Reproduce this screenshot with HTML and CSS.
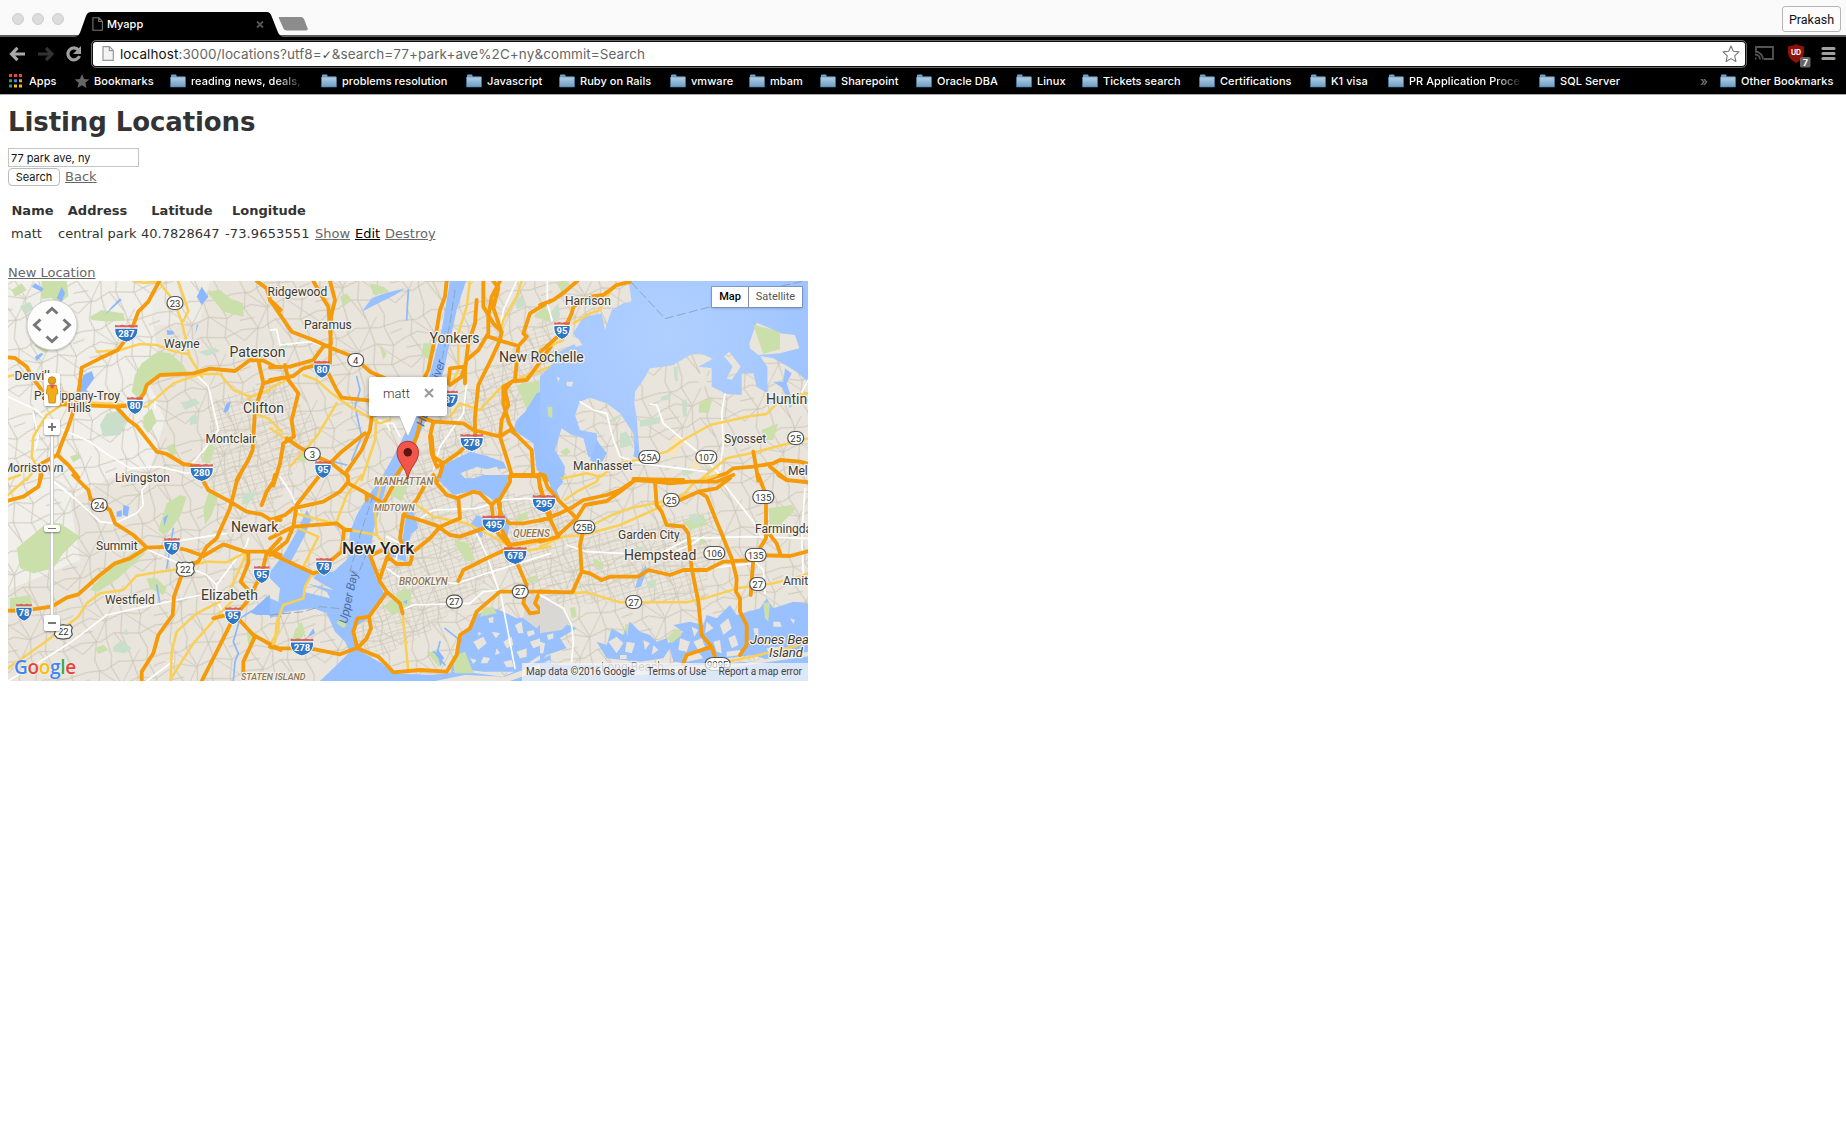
FILE: index.html
```html
<!DOCTYPE html>
<html lang="en">
<head>
<meta charset="utf-8">
<title>Myapp</title>
<link rel="stylesheet" href="styles.css">
</head>
<body>
<svg class="defs" width="0" height="0">
  <defs>
    <linearGradient id="fold" x1="0" y1="0" x2="0" y2="1"><stop offset="0" stop-color="#b4d0e4"/><stop offset="1" stop-color="#6c9dc4"/></linearGradient>
    <symbol id="folder" viewBox="0 0 16 14"><path d="M1 2.500V1.500Q1 .5 2 .5h3.500q1 0 1 1v1H15V13H1z" fill="#78a5c8"/><path d="M.5 3h15v10H.5z" fill="url(#fold)" stroke="#4e7fa8" stroke-width=".6"/></symbol>
    <symbol id="page" viewBox="0 0 12 15"><path d="M1 .7h6.500L11.300 4.500V14.300H1zM7.300 .7v4h4" stroke-width="1.200"/></symbol>
  </defs>
</svg>
<header class="chrome">
  <div class="titlebar">
    <div class="lights"><i></i><i></i><i></i></div>
    <svg class="tabs" width="240" height="25" viewBox="0 0 240 25">
      <path d="M0 25C4 24 5 21 6 18L11 4Q12.500 0 16 0H192Q195 0 196.500 4L202 18Q204 24 208 25z" fill="#000"/>
      <path d="M204 5h22q2 0 3 2l3.500 9q.8 2.500-1.500 2.500h-19q-3 0-4-3l-4-9q-.6-1.500 0-1.500z" fill="#8c8c8c"/>
      <path d="M182 9.500l6 6M188 9.500l-6 6" stroke="#555" stroke-width="1.800"/>
    </svg>
    <div class="tabname"><svg width="11" height="14" fill="none" stroke="#777"><use href="#page"/></svg><span>Myapp</span></div>
    <button class="profile">Prakash</button>
  </div>
  <div class="toolbar">
    <svg class="nav" width="90" height="28" viewBox="0 0 90 28" fill="none" stroke-width="3.200">
      <path d="M12 14h13M17.500 7.800L11.500 14l6 6.200" stroke="#a9a9a9"/>
      <path d="M38 14h13M46 8l6 6-6 6" stroke="#333"/>
      <path d="M78.500 10A6 6 0 1 0 79.500 16" stroke="#a0a0a0"/><path d="M81 6v8h-8z" fill="#a0a0a0"/>
    </svg>
    <div class="omnibox">
      <svg width="12" height="15" fill="#f4f4f4" stroke="#999"><use href="#page"/></svg>
      <span class="url"><b>localhost</b>:3000/locations?utf8=<i>✓</i>&amp;search=77+park+ave%2C+ny&amp;commit=Search</span>
      <svg class="fav" width="18" height="18" viewBox="0 0 18 18"><path d="M9 1l2.300 5.300 5.700.6-4.300 3.900 1.200 5.700L9 13.600l-4.900 2.900 1.200-5.700L1 6.900l5.700-.6z" fill="#fff" stroke="#777" stroke-width="1.100" stroke-linejoin="round"/></svg>
    </div>
    <svg class="ext" width="96" height="30" viewBox="0 0 96 30">
      <g fill="none" stroke="#555" stroke-width="1.800"><path d="M6 13V8h17v12h-9M5 15.500a5 5 0 0 1 5 5M5 12.500a8 8 0 0 1 8 8"/><path d="M5 19.500h1.500"/></g>
      <path d="M46 5c-3 2-6 2-8 2.500V13c0 6 4 8.500 8 11 4-2.500 8-5 8-11V7.500C52 7 49 7 46 5z" fill="#90110a"/>
      <text x="46" y="16" class="ub">UD</text>
      <rect x="50" y="18" width="10.500" height="10.500" rx="1.500" fill="#666"/><text x="55.300" y="27" class="count">7</text>
      <path d="M73 9.500h11M73 14.500h11M73 19.500h11" stroke="#a0a0a0" stroke-width="3.200" stroke-linecap="round"/>
    </svg>
  </div>
  <nav class="bookmarks">
    <a><svg width="13" height="14" viewBox="0 0 13 14"><path d="M0 0h3v3H0zM5 0h3v3H5zM10 0h3v3h-3z" fill="#f44336"/><path d="M0 5.300h3v3H0zM0 10.600h3v3H0z" fill="#34a05f"/><path d="M5 5.300h3v3H5z" fill="#4285f4"/><path d="M10 5.300h3v3h-3z" fill="#f0a020"/><path d="M5 10.600h3v3H5zM10 10.600h3v3h-3z" fill="#fbbc05"/></svg><span>Apps</span></a>
    <a><svg width="15" height="14" viewBox="0 0 18 17"><path d="M9 0l2.500 6 6.500.6-5 4.100 1.600 6.300L9 13.600 3.400 17 5 10.700 0 6.600 6.500 6z" fill="#666"/></svg><span>Bookmarks</span></a>
    <a><svg><use href="#folder"/></svg><span class="fade">reading news, deals,</span></a>
    <a><svg><use href="#folder"/></svg><span>problems resolution</span></a>
    <a><svg><use href="#folder"/></svg><span>Javascript</span></a>
    <a><svg><use href="#folder"/></svg><span>Ruby on Rails</span></a>
    <a><svg><use href="#folder"/></svg><span>vmware</span></a>
    <a><svg><use href="#folder"/></svg><span>mbam</span></a>
    <a><svg><use href="#folder"/></svg><span>Sharepoint</span></a>
    <a><svg><use href="#folder"/></svg><span>Oracle DBA</span></a>
    <a><svg><use href="#folder"/></svg><span>Linux</span></a>
    <a><svg><use href="#folder"/></svg><span>Tickets search</span></a>
    <a><svg><use href="#folder"/></svg><span>Certifications</span></a>
    <a><svg><use href="#folder"/></svg><span>K1 visa</span></a>
    <a><svg><use href="#folder"/></svg><span class="fade">PR Application Proce</span></a>
    <a><svg><use href="#folder"/></svg><span>SQL Server</span></a>
    <a class="more">»</a>
    <a><svg><use href="#folder"/></svg><span>Other Bookmarks</span></a>
  </nav>
</header>
<main>
  <h1>Listing Locations</h1>
  <form class="search">
    <input type="text" value="77 park ave, ny">
    <div class="actions"><button type="button">Search</button><a href="#">Back</a></div>
  </form>
  <table>
    <colgroup><col class="c1"><col class="c2"><col class="c3"><col class="c4"><col class="c5"><col class="c6"><col class="c7"></colgroup>
    <tr><th>Name</th><th>Address</th><th>Latitude</th><th>Longitude</th><th colspan="3"></th></tr>
    <tr><td>matt</td><td>central park</td><td>40.7828647</td><td class="lng">-73.9653551</td><td><a href="#">Show</a></td><td><a href="#" class="hot">Edit</a></td><td><a href="#">Destroy</a></td></tr>
  </table>
  <a href="#" class="new">New Location</a>
  <section class="map">
    <svg class="tiles" width="800" height="400" viewBox="8 281 800 400">
      <defs>
        <pattern id="streets" width="97" height="83" patternUnits="userSpaceOnUse" patternTransform="rotate(-14) scale(.8)">
          <path d="M0 12L22 15 41 8 70 14 97 12M0 34L18 30 37 38 61 33 82 40 97 34M0 58L25 62 44 55 75 63 97 58M12 0L15 14 9 33 20 60 12 83M34 0L30 12 38 37 33 59 34 83M57 0L60 32 52 57 57 83M80 0L76 15 82 40 74 62 80 83M0 72L20 60 38 37 60 11 70 0M61 33L97 72M15 14L37 38M44 55L57 83M0 46L19 47M82 24L97 22" fill="none" stroke="#c9c1b2" stroke-width="1.050"/>
        </pattern>
        <pattern id="grid" width="13" height="9" patternUnits="userSpaceOnUse" patternTransform="rotate(-16)">
          <path d="M0 0H13M0 4.500H13M0 0V9M6.500 0V9" fill="none" stroke="#cfc8ba" stroke-width=".7"/>
        </pattern>
        <radialGradient id="sea" gradientUnits="userSpaceOnUse" cx="380" cy="200" r="620"><stop offset="0" stop-color="#b0d0ff"/><stop offset=".4" stop-color="#a8caff"/><stop offset="1" stop-color="#96beff"/></radialGradient>
        <path id="i2" d="M-11.500-4.500h23C12 2 9 7 0 9.500-9 7-12 2-11.500-4.500z"/>
        <path id="i1" d="M-8-4.500H8C9 2 6 7 0 9.500-6 7-9 2-8-4.500z"/>
        <g id="is"><use href="#i1" fill="#2f76c4" stroke="#fff" stroke-width="1"/><path d="M-8-5.500L-7.500-8l2 .8L-3-8l3 .8L3-8l2.500.8L7.500-8 8-5.500z" fill="#d9615d"/></g>
        <g id="iw"><use href="#i2" fill="#2f76c4" stroke="#fff" stroke-width="1"/><path d="M-11.500-5.500L-11-8l3 .8L-4-8l4 .8L4-8l4 .8 3-.8.5 2.500z" fill="#d9615d"/></g>
        <rect id="p1" x="-8" y="-6.500" width="16" height="13" rx="6.500"/>
        <rect id="p3" x="-10.500" y="-6.500" width="21" height="13" rx="6.500"/>
        <path id="us" d="M-7-7l3 .8L0-7l4 .8L7-7l2 3-1 3 1 4-3 3.500-6 1-6-1L-9 3l1-4-1-3z"/>
      </defs>
      <rect x="8" y="281" width="800" height="400" fill="#e9e5dc"/>
      <path d="M8 281H160L152 318 158 352 148 380 165 420 150 470 110 478 70 500 80 560 8 590z" fill="#f0efea"/>
      <path d="M150 281h60l-10 40-45 5z" fill="#eeece6"/>
      <rect x="8" y="281" width="800" height="400" fill="url(#streets)"/>
      <path d="M400 470l65-70 85-90 10 70-70 60-30 60-40 50zM385 560l120-70 100 40 110-20-10 90-160 5-40-40-80 70-60 30-20-60zM210 400l70-20 40 50-50 80-60-20z" fill="url(#grid)"/>

      <g transform="translate(0 270) scale(.333333)">
        <path class="park" d="M125 33h75l5 45-30 25-20-20-30 5zM35 60l30-20 15 20-35 20zM270 140l35-20 65 10 5 20-50 5-50-5zM425 280l50-35 35 5 40 35 10 20-80 5-40 30-15 55-30-30 10-50zM620 65l40-5 30 25 40 15v40l-60-15zM430 440l25-25 15 40-25 35-15-20zM500 530l20-10 10 30-15 10zM605 575l20-55 20 10-15 50zM210 560l20-8 15 10-25 15zM100 225l30-10 25 15-20 20z"/>
        <path class="grove" d="M320 430l50-10 10 30-20 45-50 5-10-35zM545 400l40-15 15 15-45 20zM595 245l50-12 15 10-40 15zM570 440l20-5 5 25-25 5zM60 110l30-15 10 20-25 20z"/>
        <path class="lake" d="M185 50l10 20-10 25-15-10zM95 50l10-10 25 15-5 10zM335 110l25-25 5 5-50 45zM605 50l20 30-20 25-15-25zM240 350l10-35 25-12 8 22-25 35 10 5-30 5zM105 260l20-12 5 5-20 20zM670 425l10-25 12-5-6 25-10 8zM500 180l20 3 2 10-20 2zM590 165l6-3-10 30z"/>
        <path class="white" d="M24 380L110 420 155 465 270 515 310 545 390 595 480 590 560 610 610 600M595 320L625 350 655 480 640 505 570 590M465 380V415M100 430l15 70-10 40"/>
        <path class="minor" d="M24 320L60 310 80 315M290 245L360 240 420 222 470 225 520 243 565 253 605 320 M400 33L430 38 475 35 520 90 545 155 570 265M535 33l20 60 10 30-15 30M24 628L60 615M155 630v-170M160 360L210 370 230 395 400 405 440 410 520 340 600 312 660 312 700 360 750 380 810 360M200 395L140 435 100 500 95 560 110 590 80 630M745 385l30 50 30 10 40 40"/>
        <path class="major" d="M478 33L445 95 415 125 400 165 380 205 352 241 300 265 245 293 238 350 228 400 205 470 185 520 172 555 125 580 120 630M172 555L205 585 235 622M24 262L45 264 80 290 95 320 125 360 130 385 160 402 275 407 350 410 405 405 432 370 440 345 480 315 580 310 630 296 705 303 750 270 790 272 825 290 842 292M350 412L385 450 410 468 470 545 500 552 550 582 600 590M770 33L800 55 810 90 842 120M775 272L790 340 765 420 758 540 745 570 710 630M790 340L842 325"/>
      </g>
      <g transform="translate(0 475) scale(.333333)">
        <path class="park" d="M50 220l90-75 40 0 60 40-50 50-30 45-60 15-40-15zM30 370l60-10 10 45-70 10zM475 165l25-80 40-25 20 5-20 60-30 40-20 15zM270 345l60-70 90-55 15 15-80 75-60 40zM440 310l30 0 30 30-10 20-40-20zM740 470l30 0v20l-25 20zM285 520l25-10 15 15-30 12zM655 60l-20 60-20 30-5-50 20-60z"/>
        <path class="grove" d="M340 515l25-20 30 25-20 15-35-5zM730 55l45-5-30 35-20 5zM380 460l5 20-18-3z"/>
        <path class="lake" d="M350 110l15-5v20h-15zM370 90l18 5-5 30-15-5zM490 130l15-12-12 35zM842 350L800 365 750 412 770 420 842 420z"/>
        <path class="stream" d="M700 618L705 560 715 535 700 500 720 430 755 408 842 425M470 330l10 55M500 280l20-120"/>
        <path class="white" d="M155 15L230 75 300 140 345 145 410 115 430 90 425 45 460 10M24 618L120 560 215 500 320 420 410 400 600 360 642 355M430 218L560 275 620 300 650 330 740 210 745 190M520 200L680 175M440 618l80-60M650 330v50l40 60"/>
        <path class="minor" d="M24 580L130 505 235 425 260 385 300 355 370 345 410 302 480 290 540 282 620 260 680 262 735 233M740 233L690 345 660 380 590 415 530 470 515 530 512 618M700 375l-40 40-80 90-70 110M842 300L835 470 815 500M24 60L80 10"/>
        <path class="major" d="M220 0L265 45 272 72 330 105 345 145 400 180 440 218M125 0L115 35 70 65 24 77M24 407L70 407 155 395 200 368 235 358 300 300 345 265 390 250 440 218 515 215 560 225 610 243 670 208 735 230 810 230 842 240M545 300L522 365 518 420 475 480 460 535 425 590V618M560 272L595 260 620 215 650 190 690 100 710 20 720 0M745 235V265L722 320 745 345M842 190L800 235 785 295 745 375 700 430 655 520 605 618M640 430L700 415 760 480 842 525M765 485L730 560V618M785 90L800 50 820 20 825 0M600 0L625 45 690 80 740 110 785 118 810 133 842 135"/>
      </g>

      <g transform="translate(270 270) scale(.333333)">
        <path class="park" d="M210 80l20-10 15 20-25 20zM300 40l40 10 20 15-50 10zM330 230l20 20-10 20zM460 220l25 0-5 50-25-15zM740 345l80-15-10 50-40 40zM790 140l30-30 20 15v30zM80 570l20-20 10 30zM420 560l10 25-10 30z"/>
        <path class="grove" d="M25 245l15-30 15 10-15 30zM735 90l20-12 10 30-25 10z"/>
        <path class="wet" d="M540 33H588L560 120 545 190 522 300 488 400 455 480 420 545 385 630H330L370 560 400 500 430 440 475 330 515 180zM842 355L800 370 765 425 740 450 730 480 790 520 800 600 842 630zM600 545L650 558 700 575 710 595 660 600 620 590 570 610 590 630H490L530 580zM275 125l30-40 40-15 60-15-30 20-50 25z"/>
        <path class="stream" d="M260 320l10 40-15 50 20 90-30 70M415 60l-5 90M190 575l40 10"/>
        <path class="land" d="M640 600l40-10 15 25-50 8z"/>
        <path class="white" d="M0 180L20 178 30 225 120 215 150 225M740 33L700 120 690 180M590 340l-10 90-70 100-20 70M360 480l-10-20-40-15M390 500l-20-40-50 0"/>
        <path class="minor" d="M600 33L590 110 565 190V300L550 330M755 33L740 80 700 150 690 190M842 290L760 320 690 355 630 420 570 400 540 440M100 315L140 330 185 370 240 410 330 460 360 450M0 355L50 330M200 400L140 500 60 590M0 475l60 40M320 450l-5 60-40 120"/>
        <path class="major" d="M130 33L150 70 175 110 183 220M180 33L195 90 183 140 180 280M0 90L65 185 130 210 185 235 250 260 300 305 345 325M0 292L60 290 130 270 160 230 180 225M0 330L70 318 100 295 160 280 180 320 200 360 215 383 300 392M45 285L55 330 85 370 65 450 72 500 40 520 30 580 15 630M50 505L85 530 140 560 185 580 235 620M305 440L300 480 275 540 230 605M185 575L215 545 285 490M530 33L525 80 510 120 500 180 475 300 465 320M455 440L440 500 410 570 370 630M460 445L490 455 580 460 610 480 690 500 720 480 740 495 785 540 790 615M490 455L480 500 485 550 500 590 520 580 570 545 605 510M485 500l5 60 30 20-15 50M640 33V110L670 160 695 185 690 210 665 265 625 345 615 440V510M690 33L665 80 655 140V190L625 240 590 270 575 320 540 345M620 90L615 160 595 220 585 300V340M535 340L540 295 585 290M655 200L700 215 745 228 770 200 760 190 780 130 842 92M745 228L735 330 700 350 700 400 718 460 735 490M842 230L800 290 770 330 725 335 705 360 715 405 695 450 690 500 715 580 725 615 780 615 842 628M670 33l15 20-15 60 25 75"/>
        <path class="ferry" d="M555 60L540 160 515 270"/>
      </g>

      <g transform="translate(540 270) scale(.333333)">
        <path class="sea" d="M265 33H842V370L775 310 745 290 700 265 660 258 682 290 682 370 650 350 640 310 605 310 605 375 560 372 515 350V295L475 290 530 260 555 262 578 290 560 325 575 330 602 290 568 245 550 262 515 265 480 250 450 255 400 285 370 290 330 295 310 330 285 365 283 400 290 440 300 570 285 560 280 490 240 430 200 400 150 383 120 395 105 435 120 480 170 490 175 570 145 560 130 505 95 495 65 475 45 540 75 590 70 630H0V320L40 280 40 255 115 215 100 190 130 140 185 130 195 180 215 120 250 100 275 95 270 60z"/>
        <path class="land" d="M628 220L650 158 690 175 720 190 765 195 778 235 720 250 655 255 630 235zM80 335l20 0-5 15-15-3zM88 200l25 5 15 20-20 5zM470 320l30-30 0 50-15 20zM50 320l10 5-5 10z"/>
        <path class="wet" d="M735 295l20 15-15 30 20 60-10 15-22-60-28-20 30 0zM150 570l20-60 30 40-20 40zM280 560l10-50 8 50z"/>
        <path class="park" d="M640 165l50 12 30 10v50l-50 15zM50 40l20-8 20 10-25 25zM478 395l40-12-12 45-30 0zM665 480l50-20-15 50-35 0zM22 410l15 0 0 35-12-5zM60 545l20-12 12 12-15 12z"/>
        <path class="grove" d="M400 290l12 0 2 45-10-5zM425 395l15-8v50l-10 5zM365 380l30-12-5 20-30 5zM210 450l35-20-10 15-25 15zM300 450l60-10 0 20-60 10zM240 490l20-5 20 40-40 10zM30 130l25-30 5 40-20 20zM425 600l30-12 5 20-30 10z"/>
        <path d="M385 570l10-55 15-20 20 25-20 30zM445 600l20-35 15 20-10 20z" fill="#f7e3bd"/>
        <path class="white" d="M120 395L160 420 200 430 220 510 240 560 300 580 500 605M330 402L350 405 370 460 430 510 490 560 540 615M555 372L545 430 550 520 540 600M22 33v70l15 50M804 330l-25 50"/>
        <path class="minor" d="M0 630L70 625 140 610 180 620 240 580 290 570 380 545 430 510 510 465 620 440 680 432 730 380 804 370M100 160L150 130 180 120 190 95 225 45 250 38M0 240L70 210M480 630L560 565 640 548 740 522 804 505"/>
        <path class="major" d="M0 105L40 90 75 65 112 33M0 247L70 185 95 130 100 110 150 80 190 75 230 45 270 36M0 612L20 620 28 630M280 627L340 628 430 630M490 632L560 610 580 595 640 590 700 580 720 570 780 575 806 582M640 545L655 632M690 590L740 630"/>
        <path class="ferry" d="M275 38L375 146 520 108M725 48L806 30"/>
      </g>

      <g transform="translate(270 475) scale(.333333)">
        <path class="wet" d="M330 15L352 25 332 90 310 170 302 230 315 300 330 330 345 360 300 425 250 460 262 520 290 540 335 565 370 595 490 600 560 590 620 595 700 605 842 540V618H150L200 570 240 530 225 500 195 470 170 415 130 400 50 410 0 430V290L40 240 80 170 110 105 125 130 100 190 60 265 130 290 100 350 180 370 170 350 110 325 190 345 130 310 150 290 190 290 235 250 240 170 260 120 290 70zM445 60L430 110 445 160 425 175 405 230 410 262 355 240 345 222 385 205 398 190 408 120zM500 10L550 60 620 45 680 80 700 55 720 0H640L610 10zM600 150l20-30 25 10-10 60zM690 100l30 40-10 60-15-10zM570 480L610 450 620 420 670 400 700 410 740 430 780 425 842 460V520L780 560 740 590 640 590 560 580 540 600 555 540z"/>
        <path class="land" d="M0 310l30 30-5 40-25-10zM610 500l30-15 10 20-25 20zM640 545l20 5-8 15-20 0zM700 500l25-15 5 25-20 10zM665 470l25 5-12 15zM740 530l30-10 0 25-20 5zM735 450l20-10 5 35-15 0zM780 500l30-10 5 20-25 10zM700 560l25-5 5 20-20 2zM600 550l20 5-10 12zM655 430l15-5 0 18-12 0zM770 470l20-5 5 12-20 8zM680 520l10 15-15 5zM625 470l10 5-10 8zM495 618l90-18 120 5 135-50v20l-120 43z"/>
        <path d="M770 365l70-5v60l-40 40-40-30z" fill="#dad8d4"/>
        <path class="park" d="M340 395l60-55 25 5-5 50-50 25zM545 545l40-15 25 65-55 0zM470 530l30 0 20 35-15 10zM210 430l20 20-10 10-20-15zM370 30l45-10-20 60-30-20zM640 400l30-5 10 20-50 10zM555 195l40 10 20 50-25 5-35-50zM770 310l30-10 5 15-30 8zM740 120l30-8 5 20-30 8zM60 515l15-50 20-25 10 30-20 40z"/>
        <path class="lake" d="M400 380l12-6-2 14zM500 520l20 25-8 30-8-30zM130 460l5 15-25 15z"/>
        <path class="stream" d="M510 500l-10 40 25 30M525 460l50 40M490 530l30 20"/>
        <path class="white" d="M30 5L60 50 90 115M450 130L490 105 620 100 700 75 770 70 842 80M350 280L400 315 560 325 650 295 842 235M395 405L430 390 600 385 640 350 690 345 735 580M620 175L650 240 685 345M350 185l40 20-15 60M800 355l40 20"/>
        <path class="minor" d="M75 115L190 145 240 165 320 180 350 215M320 180L315 100 340 0M440 90L490 125 590 145 660 180 720 215 842 195M720 235L842 215M200 140L230 60 275 0M85 160L145 185 100 275M125 300L105 335 100 370 40 390 20 440 15 500 0 520M398 415L415 590"/>
        <path class="major" d="M18 0L10 32M150 0L80 90 70 155 50 200 0 240M0 135L45 120 70 100 160 80 210 50 235 20 232 0M235 25L280 50 340 85 370 30M290 75l0-15M0 190L70 155 200 145 225 165H242M222 165L215 230 165 270M0 235L130 295 150 288M470 20L440 75 400 120 390 190 397 210 355 235 330 310M305 240L350 220M300 240L330 320 350 350 390 385 398 415M350 255L360 250 380 267H420L430 230 480 190 510 155 570 130 565 70 530 60 500 25 490 0M400 122L440 132 500 152 540 180 570 185 640 160M565 68L610 50 630 55 665 90 670 135M560 70l-20-8M685 80L695 130 720 145 760 145 842 130M685 80L720 20V3H780L805 0 810 40 842 120M680 75l-15 15M680 170L720 215M690 85l0 70 30 55 120-20M720 218L660 245 600 275 580 285 565 318M735 250L770 330 760 385 780 415 815 410 795 385 805 360M842 350H690L620 410 600 460 570 480 560 540 530 590 450 585 370 592 350 570 325 545 262 520M350 352L297 425 262 430 250 470 262 520 290 490 303 460 297 425M0 515L20 520H120L210 538 262 518"/>
        <path class="ferry" d="M310 60L270 180 240 290M0 420L100 410 150 395 250 405M240 285l25 10 25-60"/>
      </g>

      <g transform="translate(540 475) scale(.333333)">
        <path class="wet" d="M20 0L55 0 70 20 50 45 60 70 40 60zM0 450L30 430 60 440 110 460 60 490 80 520 20 540 0 560zM170 500L200 510 215 460 250 480 270 440 300 470 330 480 350 500 380 490 390 520 370 550 300 560 200 550zM385 505L430 470 400 450 450 440 490 450 500 420 530 430 570 390 590 420 660 400 680 370 700 400 760 380 804 385V540L700 560 640 540 560 550 480 570 400 560zM0 560L60 570 300 572 560 565 700 555 804 540V618H0zM285 340l12-40 20-30 5 15-20 50z"/>
        <path class="land" d="M205 500l25-15 20 20-20 30zM260 500l25 5-10 30-20-5zM240 540l20 0 0 12-20 0zM420 490l30 10-10 30-25-5zM455 455l20 10-12 20zM500 440l20 20-25 15zM460 500l25-10 10 25-20 10zM540 450l25-20 10 30-25 20zM565 490l20-10 10 30-20 10zM430 545l40-20 20 25-50 10zM520 500l20-5 5 40-15-5zM640 460l15 0 0 20-12-5zM700 440l20 0 5 15-25 0zM750 430l15 5-5 12zM20 480l20-5 0 15-15 5zM0 500l15 5-5 30-10 0zM680 520l40-5 10 10-45 8zM310 495l20 10-15 20zM340 510l15 15-20 15zM560 530l40-5 0 15-40 5zM0 600l100-18 300-8 200-8 204-36v14L560 580 300 600z"/>
        <path d="M0 380l40-5 55 60-30 30-65 10z" fill="#dad8d4"/>
        <path class="park" d="M685 100l70-10 10 15-45 45-30 0zM430 140l60-20 10 30-50 15zM160 250l30 15-5 20-25-15zM380 490l30-30 15 20-30 25zM255 450l12-5-5 40zM90 400l15-5 5 30-15 5zM480 180l15 15-20 25zM670 385l20-5-5 60-10-10z"/>
        <path class="grove" d="M280 220l30-5-5 40-25-5zM320 320l30-8-5 25-20 5zM445 120l25-5 20 25-30 10z"/>
        <path class="white" d="M80 210L140 230 250 235 350 240 450 190 620 185 804 190M0 360L70 400 95 450 100 500 95 560M550 25L640 140 660 180M795 40L785 180 790 300M640 255l30 30 5 70M380 240L450 210 490 185M500 280l140-15"/>
        <path class="minor" d="M75 75L110 50 170 20 180 0M130 165L215 120 270 100 360 82 430 60 460 25 530 0M0 215L70 185 130 180 240 150 370 92M95 354L140 352 240 382 440 382 500 368 600 338 700 325 770 308 804 295M560 560L620 548 700 530 770 512 804 500"/>
        <path class="major" d="M0 137L60 115 100 95 130 75 200 60 240 45 285 15 345 20 390 25 450 20 530 20 580 0M110 130L135 90 200 78 240 50 290 12M10 0L22 35 60 80 110 130 50 185M0 90L10 80M0 30l20 80 35 75-55 15M130 165L120 210 125 290 97 352 0 350M125 290L150 295 185 315 210 305H295L325 285 390 300 430 285H500L550 260 640 255M345 20L350 90 365 110 380 150 430 155 445 175 455 280 475 380 485 480 515 515 525 545M475 50L500 65 530 140 575 250 590 310 588 350 600 370V410L620 450V510L600 540M420 75L475 50 530 40 570 10M655 0L678 60V190L640 250 632 360M690 180L710 205 722 240M640 240L750 243 806 228M715 0L740 15 806 22M515 515L440 540 430 565"/>
      </g>

      <g class="signs">
        <g transform="translate(126.300 332.700)"><use href="#iw"/><text y="4">287</text></g><g transform="translate(135 405)"><use href="#is"/><text y="4">80</text></g><g transform="translate(201.700 472)"><use href="#iw"/><text y="4">280</text></g><g transform="translate(322 368.700)"><use href="#is"/><text y="4">80</text></g><g transform="translate(450 398.500)"><use href="#is"/><text y="4">87</text></g><g transform="translate(471.700 442)"><use href="#iw"/><text y="4">278</text></g><g transform="translate(323 469)"><use href="#is"/><text y="4">95</text></g><g transform="translate(562 330)"><use href="#is"/><text y="4">95</text></g><g transform="translate(172 546)"><use href="#is"/><text y="4">78</text></g><g transform="translate(261.700 574)"><use href="#is"/><text y="4">95</text></g><g transform="translate(24 611.700)"><use href="#is"/><text y="4">78</text></g><g transform="translate(233 615.300)"><use href="#is"/><text y="4">95</text></g><g transform="translate(493.700 523.500)"><use href="#iw"/><text y="4">495</text></g><g transform="translate(515.300 555)"><use href="#iw"/><text y="4">678</text></g><g transform="translate(324 566)"><use href="#is"/><text y="4">78</text></g><g transform="translate(302 646.500)"><use href="#iw"/><text y="4">278</text></g><g transform="translate(544 503)"><use href="#iw"/><text y="4">295</text></g>
      </g>
      <g class="routes">
        <g transform="translate(175 303)"><use href="#p1"/><text y="3.500">23</text></g><g transform="translate(355.700 360)"><use href="#p1"/><text y="3.500">4</text></g><g transform="translate(312.300 454)"><use href="#p1"/><text y="3.500">3</text></g><g transform="translate(649.300 457)"><use href="#p3"/><text y="3.500">25A</text></g><g transform="translate(706.300 457)"><use href="#p3"/><text y="3.500">107</text></g><g transform="translate(795.700 438)"><use href="#p1"/><text y="3.500">25</text></g><g transform="translate(99.300 505)"><use href="#p1"/><text y="3.500">24</text></g><g transform="translate(454.300 601.700)"><use href="#p1"/><text y="3.500">27</text></g><g transform="translate(520.300 591.700)"><use href="#p1"/><text y="3.500">27</text></g><g transform="translate(584.300 527)"><use href="#p3"/><text y="3.500">25B</text></g><g transform="translate(671.300 500)"><use href="#p1"/><text y="3.500">25</text></g><g transform="translate(714.300 553)"><use href="#p3"/><text y="3.500">106</text></g><g transform="translate(763.300 497)"><use href="#p3"/><text y="3.500">135</text></g><g transform="translate(755.700 555)"><use href="#p3"/><text y="3.500">135</text></g><g transform="translate(757.700 584)"><use href="#p1"/><text y="3.500">27</text></g><g transform="translate(633.700 602)"><use href="#p1"/><text y="3.500">27</text></g><g transform="translate(717.700 664)"><use href="#p3" transform="scale(1.200 1)"/><text y="3.500">909E</text></g><g transform="translate(185.300 569)"><use href="#us"/><text y="3.500">22</text></g><g transform="translate(63.300 631.700)"><use href="#us"/><text y="3.500">22</text></g>
      </g>
      <g class="town">
        <text x="164" y="348">Wayne</text><text x="14.500" y="380">Denville</text><text x="34" y="400">Parsippany-Troy</text><text x="67.500" y="411.500">Hills</text><text x="205.500" y="443">Montclair</text><text x="63.500" y="472" text-anchor="end">Morristown</text><text x="115" y="482">Livingston</text><text x="267.500" y="296">Ridgewood</text><text x="304" y="329">Paramus</text><text x="565" y="305">Harrison</text><text x="724" y="443">Syosset</text><text x="573" y="470">Manhasset</text><text x="788" y="475">Melville</text><text x="96" y="550">Summit</text><text x="105" y="604">Westfield</text><text x="618" y="539">Garden City</text><text x="755" y="533">Farmingdale</text><text x="783" y="585">Amityville</text><text x="601" y="671" opacity=".6">Long Beach</text><text x="750" y="644" class="it">Jones Beach</text><text x="769" y="657" class="it">Island</text>
      </g>
      <g class="city">
        <text x="229.500" y="357">Paterson</text><text x="243" y="412.500">Clifton</text><text x="429.500" y="343">Yonkers</text><text x="499" y="361.500">New Rochelle</text><text x="766" y="404">Huntington</text><text x="231" y="531.500">Newark</text><text x="201" y="600">Elizabeth</text><text x="624" y="560">Hempstead</text><text x="342" y="553.500" class="ny">New York</text>
      </g>
      <g class="boro">
        <text x="374" y="484.500">MANHATTAN</text><text x="374" y="511" class="sm">MIDTOWN</text><text x="513" y="536.500">QUEENS</text><text x="399" y="584.500">BROOKLYN</text><text x="241" y="680" class="sm">STATEN ISLAND</text>
      </g>
      <g class="water-name"><text transform="translate(347 624) rotate(-78)">Upper Bay</text><text transform="translate(424 427) rotate(-72)">Hudson River</text></g>
      <path d="M407.500 479C406.500 467 397 463 397 452a10.800 10.800 0 0 1 21.600 0C418.600 463 409 467 408 479z" fill="#f2564a" stroke="#a8261c" stroke-width=".8"/><circle cx="407.800" cy="452.300" r="4.200" fill="#5e1410"/>
    </svg>

    <svg class="pan" width="54" height="54" viewBox="0 0 54 54"><circle cx="27" cy="27" r="25" fill="#fff" fill-opacity=".96" stroke="#c9c9c9" stroke-width=".8"/><path d="M21.500 15.500L27 10.500l5.500 5M21.500 38.500L27 43.500l5.500-5M15.500 21.500L9.500 27l6 5.500M38.500 21.500L44.500 27l-6 5.500" fill="none" stroke="#777" stroke-width="3"/></svg>
    <div class="peg"><svg width="14" height="28" viewBox="0 0 14 28"><circle cx="7" cy="4.500" r="3.800" fill="#e8a012" stroke="#a86a08" stroke-width=".6"/><path d="M2.500 9.500h9l1.500 8-2 1-.8 8.500H4l-.8-8.500-2-1z" fill="#f2ad18" stroke="#b87808" stroke-width=".7"/><path d="M4 8.500h6.500L7.200 13z" fill="#e5534a"/></svg></div>
    <div class="rail"></div>
    <div class="zoom in"></div>
    <div class="zoom thumb"></div>
    <div class="zoom out"></div>
    <div class="info"><span>matt</span><svg width="10" height="10" viewBox="0 0 10 10"><path d="M1 1l8 8M9 1L1 9" stroke="#999" stroke-width="2"/></svg></div>
    <svg class="tail" width="22" height="24" viewBox="0 0 22 24"><path d="M2 0L11 22 20 0z" fill="#fff"/><path d="M2 1L11 22 20 1" fill="none" stroke="#aaa" stroke-width=".6"/></svg>
    <div class="types"><b>Map</b><span>Satellite</span></div>
    <div class="logo"><i class="b">G</i><i class="r">o</i><i class="y">o</i><i class="b">g</i><i class="g">l</i><i class="r">e</i></div>
    <div class="legal"><span>Map data ©2016 Google</span><span>Terms of Use</span><span>Report a map error</span></div>
  </section>
</main>
</body>
</html>
```
FILE: styles.css
```css
* { box-sizing: border-box; }
body { margin: 0; height: 1121px; overflow: hidden; background: #fff; color: #333; font: 13px/18px "DejaVu Sans", sans-serif; }
.defs { display: block; position: absolute; }
.chrome { font-family: Inter, sans-serif; height: 95px; background: #000; border-bottom: 1px solid #aaa; }
.titlebar { height: 37px; background: #fafafa; border-bottom: 2px solid #5c5c5c; display: flex; align-items: flex-start; position: relative; }
.lights { display: flex; gap: 8px; padding: 13px 0 0 12px; width: 75px; }
.lights i { width: 12px; height: 12px; border-radius: 50%; background: #dcdcdc; border: 1px solid #cfcfcf; }
.tabs { margin-top: 12px; }
.tabname { position: absolute; left: 92px; top: 17px; display: flex; gap: 4px; color: #fff; font-size: 11px; font-weight: 500; line-height: 14px; }
.profile { margin: 6px 5px 0 auto; width: 59px; height: 26px; padding: 0; border: 1px solid #b5b5b5; border-radius: 3px; background: #fcfcfc; font: 12.500px Roboto, sans-serif; color: #111; }
.toolbar { height: 31px; display: flex; align-items: center; padding-top: 2px; }
.nav { width: 90px; flex: none; }
.omnibox { display: flex; align-items: center; width: 1656px; height: 28px; padding: 0 5px 0 9px; background: #fff; border: 2px solid #111; outline: 1px solid #666; outline-offset: -1px; border-radius: 5px; color: #666; margin-left: 1px; }
.url { margin-left: 6px; font-size: 13.500px; letter-spacing: .08px; white-space: nowrap; }
.url b { font-weight: 400; color: #111; }
.url i { font: 700 12px "DejaVu Sans", sans-serif; color: #444; }
.fav { margin-left: auto; }
.ext { margin-left: 3px; }
.ub { font: 700 7px Inter, sans-serif; fill: #fff; text-anchor: middle; }
.count { font: 700 9px Inter, sans-serif; fill: #fff; text-anchor: middle; }
.bookmarks { display: grid; grid-template-columns: 65px 96px 151px 145px 93px 111px 79px 71px 96px 100px 66px 117px 111px 78px 151px 161px 20px auto; padding-left: 9px; height: 26px; align-items: center; color: #fff; font-size: 11px; font-weight: 500; line-height: 16px; letter-spacing: .05px; white-space: nowrap; }
.bookmarks a { display: flex; align-items: center; gap: 5px; }
.bookmarks a svg { width: 16px; height: 14px; flex: none; }
.bookmarks a:nth-child(1) svg { width: 13px; }
.bookmarks a:nth-child(1) { gap: 7px; }
.bookmarks a:nth-child(2) { gap: 4px; }
.bookmarks .more { color: #777; font-size: 13px; }
.fade { width: 114px; overflow: hidden; -webkit-mask-image: linear-gradient(90deg, #000 75%, transparent); mask-image: linear-gradient(90deg, #000 75%, transparent); }
main { padding: 0 8px; }
h1 { margin: 11px 0 10px; font-size: 26px; line-height: 32px; letter-spacing: -.1px; }
.search input { display: block; width: 131px; height: 19px; margin: 0; padding: 1px 2px; border: 1px solid #c4c4c4; font: 11px Inter, sans-serif; color: #111; }
.actions { display: flex; align-items: center; gap: 5px; height: 18px; margin-top: 1px; }
.actions button { width: 52px; height: 18px; padding: 0; border: 1px solid #bbb; border-radius: 4px; background: #fff; font: 11px Inter, sans-serif; color: #111; }
a[href] { color: #666; }
a.hot { color: #000; }
table { table-layout: fixed; width: 432px; margin-top: 13px; border-spacing: 2px; }
th, td { padding: 1px; white-space: nowrap; text-align: left; }
th { text-align: center; padding-bottom: 2px; }
th:nth-child(n+3) { padding-left: 3px; }
.lng { letter-spacing: .12px; }
.c1 { width: 45px; } .c2 { width: 81px; } .c3 { width: 82px; } .c4 { width: 88px; } .c5 { width: 38px; } .c6 { width: 28px; } .c7 { width: 54px; }
.new { display: block; width: max-content; margin-top: 18px; line-height: 17px; }
.map { position: relative; width: 800px; height: 400px; overflow: hidden; font-family: Roboto, sans-serif; }
.tiles { display: block; }
.park { fill: #cadfaa; } .grove { fill: #c9dfc9; } .land { fill: #e9e5dc; }
.lake { fill: #8cb8ff; } .wet { fill: #99c1ff; } .sea { fill: url(#sea); }
.stream, .white, .minor, .major, .ferry { fill: none; stroke-linejoin: round; stroke-linecap: round; }
.stream { stroke: #8cb8ff; stroke-width: 5; }
.white { stroke: #fff; stroke-width: 5; }
.minor { stroke: #f9cf55; stroke-width: 7.500; }
.major { stroke: #f59a08; stroke-width: 11.500; }
.ferry { stroke: #8d9bab; stroke-width: 2.500; stroke-dasharray: 25 12; }
.signs text { font: 700 9.500px Roboto, sans-serif; fill: #fff; text-anchor: middle; }
.routes use { fill: #fff; stroke: #555; stroke-width: 1.200; }
.routes text { font: 9.500px Roboto, sans-serif; fill: #333; text-anchor: middle; }
.town, .city, .boro { paint-order: stroke; stroke: #f5f2ec; stroke-width: 2.500; stroke-linejoin: round; fill: #3d3a35; }
.town { font-size: 12px; }
.it { font-style: italic; font-size: 13px; }
.city { font-size: 14px; }
.ny { font-size: 17px; font-weight: 500; fill: #222; }
.boro { font-size: 10px; font-style: italic; font-weight: 500; fill: #8a7558; }
.sm { font-size: 9px; }
.water-name { font-size: 12px; font-style: italic; fill: #4f6f9f; }
.pan { position: absolute; left: 17px; top: 17px; filter: drop-shadow(0 1px 1px #0004); }
.peg { position: absolute; left: 36px; top: 92px; width: 16px; height: 33px; padding: 3px 1px; background: #fff; border-radius: 2px; box-shadow: 0 1px 2px #0005; }
.rail { position: absolute; left: 42px; top: 154px; width: 4px; height: 190px; background: #fff; border: 1px solid #ccc; }
.zoom { position: absolute; left: 36px; width: 16px; background: #fff; border-radius: 2px; box-shadow: 0 1px 2px #0006; display: grid; place-items: center; }
.zoom::before { content: ""; grid-area: 1 / 1; width: 8px; height: 2px; background: #777; }
.in { top: 138px; height: 16px; }
.in::after { content: ""; grid-area: 1 / 1; width: 2px; height: 8px; background: #777; }
.thumb { top: 244px; height: 7px; }
.thumb::before { height: 1px; }
.out { top: 334px; height: 16px; }
.info { position: absolute; left: 361px; top: 96px; width: 78px; height: 39px; padding: 0 13px 7px 14px; background: #fff; border-radius: 2px; box-shadow: 0 1px 4px #0007; display: flex; align-items: center; justify-content: space-between; font: 300 13px Roboto, sans-serif; }
.tail { position: absolute; left: 389px; top: 134px; }
.types { position: absolute; left: 704px; top: 6px; display: flex; height: 20px; font-size: 11px; line-height: 20px; background: #fff; box-shadow: 0 0 0 1px #7189a8aa, 0 1px 3px #0004; text-align: center; }
.types b { width: 37px; color: #000; font-weight: 500; border-right: 1px solid #88a; }
.types span { width: 53px; color: #555; }
.logo { position: absolute; left: 6px; top: 373px; display: flex; font: 600 19px/26px "Open Sans", sans-serif; letter-spacing: -.3px; text-shadow: 0 0 2px #fff; }
.logo i { font-style: normal; }
.b { color: #4285f4; } .r { color: #ea4335; } .y { color: #fbbc05; } .g { color: #34a853; }
.legal { position: absolute; right: 0; bottom: 0; display: flex; justify-content: space-between; width: 286px; height: 18px; padding: 0 6px 0 4px; background: #f5f5f5b8; font-size: 10px; line-height: 18px; color: #444; }
```
